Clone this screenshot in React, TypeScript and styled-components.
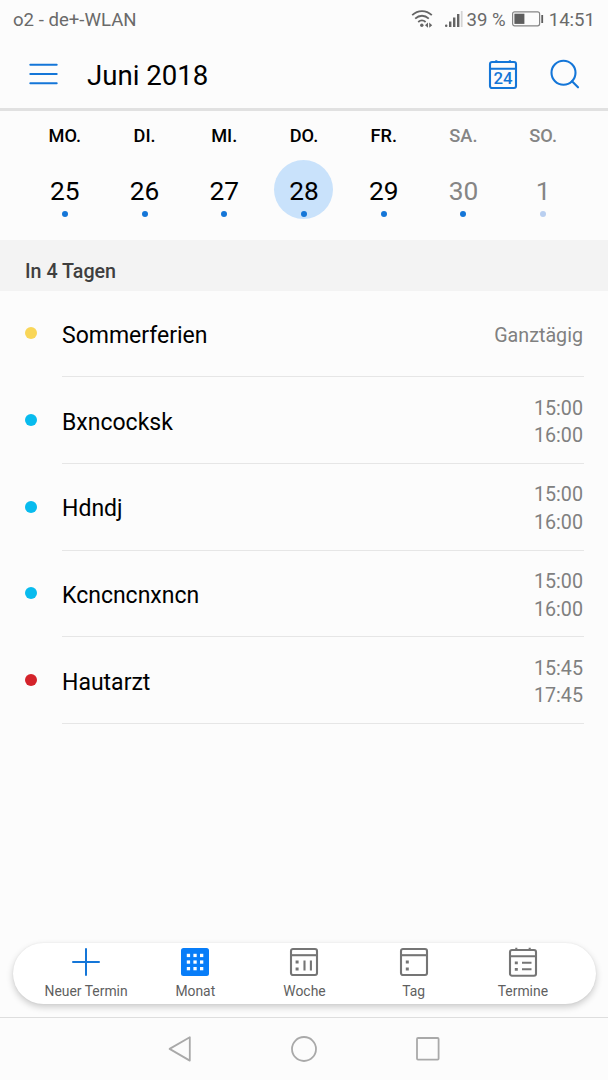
import React from 'react';
import styled, { createGlobalStyle } from 'styled-components';

const BLUE = '#1476d8';

const GlobalStyle = createGlobalStyle`
  * { box-sizing: border-box; }
  body {
    margin: 0;
    background: #fcfcfc;
    font-family: Roboto, 'Liberation Sans', sans-serif;
    color: #000;
  }
  svg { display: block; flex: none; }
`;

const Screen = styled.div`
  width: 608px;
  height: 1080px;
  display: flex;
  flex-direction: column;
  background: #fcfcfc;
  overflow: hidden;
`;

const StatusBar = styled.div`
  height: 40px;
  padding: 0 13px;
  display: flex;
  align-items: center;
  justify-content: space-between;
  font-size: 18.6px;
  line-height: 22px;
  color: #6a6a6a;
  white-space: nowrap;
`;

const StatusInfo = styled.div`
  display: flex;
  align-items: center;
`;

const Battery = styled.span`
  padding: 0 5px 2px 6px;
`;

const Signal = styled.span`
  padding: 0 4px 2px 12px;
`;

const Wifi = styled.span`
  padding-bottom: 2px;
`;

const Header = styled.header`
  height: 71px;
  padding: 0 28px 1px 29px;
  border-bottom: 3px solid #e1e1e1;
  display: flex;
  align-items: center;
`;

const Title = styled.h1`
  margin: 4px 0 0 29px;
  flex: 1;
  font-size: 27.6px;
  line-height: 32px;
  font-weight: 400;
`;

const HeaderActions = styled.div`
  display: flex;
  align-items: center;
  gap: 32px;
  padding-top: 2px;
`;

const Week = styled.section`
  height: 129px;
  padding: 0 25px;
  display: grid;
  grid-template-columns: repeat(7, 1fr);
`;

const Day = styled.div<{ $weekend?: boolean }>`
  display: flex;
  flex-direction: column;
  align-items: center;
  color: ${(p) => (p.$weekend ? '#858585' : '#000')};
`;

const DayName = styled.span`
  margin-top: 14px;
  font-size: 18.2px;
  line-height: 21px;
  font-weight: 500;
`;

const DayCircle = styled.div<{ $selected?: boolean }>`
  width: 59px;
  height: 59px;
  margin-top: 14px;
  border-radius: 50%;
  background: ${(p) => (p.$selected ? '#c9e2fb' : 'transparent')};
  display: flex;
  flex-direction: column;
  align-items: center;
  padding-top: 16px;
`;

const DayNumber = styled.span`
  font-size: 26.3px;
  line-height: 30px;
`;

const DayDot = styled.i<{ $faded?: boolean }>`
  width: 6px;
  height: 6px;
  margin-top: 5px;
  border-radius: 50%;
  background: ${(p) => (p.$faded ? '#b9cff0' : BLUE)};
`;

const SectionLabel = styled.div`
  height: 50.5px;
  padding: 14px 25px 0;
  background: #f3f3f3;
  color: #3f3f3f;
  font-size: 19.7px;
  line-height: 36px;
  font-weight: 500;
`;

const EventList = styled.ul`
  margin: 0;
  padding: 0 24px 0 25px;
  list-style: none;
  flex: 1;
`;

const EventRow = styled.li`
  height: 86.7px;
  display: flex;
  align-items: center;
`;

const EventDot = styled.i<{ $color: string }>`
  width: 12px;
  height: 12px;
  margin: 0 25px 1px 0;
  border-radius: 50%;
  background: ${(p) => p.$color};
`;

const EventBody = styled.div`
  flex: 1;
  height: 100%;
  padding: 4.4px 1px 0 0;
  display: flex;
  align-items: center;
  justify-content: space-between;
  border-bottom: 1px solid #e6e6e6;
`;

const EventName = styled.span`
  font-size: 23px;
`;

const EventTimes = styled.div`
  display: flex;
  flex-direction: column;
  align-items: flex-end;
  font-size: 19.7px;
  line-height: 27.5px;
  color: #808080;
`;

const TabBar = styled.nav`
  height: 61px;
  margin: 0 12.5px 13.5px;
  padding: 4px 18px 0 19px;
  border-radius: 31px;
  background: #fff;
  box-shadow: 0 3px 7px rgba(0, 0, 0, 0.2), 0 0 2px rgba(0, 0, 0, 0.06);
  display: grid;
  grid-template-columns: repeat(5, 1fr);
`;

const Tab = styled.div`
  display: flex;
  flex-direction: column;
  align-items: center;
  gap: 6px;
`;

const TabLabel = styled.span`
  font-size: 13.9px;
  line-height: 17px;
  color: #5f5f5f;
  white-space: nowrap;
`;

const SystemNav = styled.footer`
  height: 63px;
  padding-bottom: 1px;
  border-top: 1px solid #dedede;
  display: flex;
  justify-content: center;
  align-items: center;
  gap: 96px;
`;

const WifiIcon = () => (
  <svg width="22" height="18" viewBox="0 0 22 18" fill="none" stroke="#656565" strokeWidth="1.8">
    <path d="M1.2 5.2C6.8-.2 15.2-.2 20.8 5.2" />
    <path d="M4.2 8.6C8.3 4.8 13.7 4.8 17.8 8.6" />
    <path d="M7.2 12C9.4 10 12.4 10 14.6 12" />
    <circle cx="10.8" cy="15.2" r="1.7" fill="#656565" stroke="none" />
    <path d="M17 12.6v5.2L14 15.2zM18.2 12.6v5.2l3-2.6z" fill="#656565" stroke="none" />
  </svg>
);

const SignalIcon = () => (
  <svg width="18" height="18" viewBox="0 0 18 18" fill="#656565">
    <rect x="0" y="14.4" width="2.4" height="2.6" rx="1" />
    <rect x="4" y="11.5" width="2.4" height="5.5" />
    <rect x="8" y="7.5" width="2.4" height="9.5" />
    <rect x="12" y="4" width="2.4" height="13" />
    <rect x="15.8" y="1" width="1.8" height="16" fill="#d4d4d4" />
  </svg>
);

const BatteryIcon = () => (
  <svg width="32" height="16" viewBox="0 0 32 16">
    <rect x=".6" y=".8" width="27" height="14" rx="2" fill="none" stroke="#858585" strokeWidth="1.2" />
    <rect x="2.4" y="2.7" width="10" height="10.2" fill="#5e5e5e" />
    <rect x="29.3" y="4" width="1.8" height="8" fill="#5e5e5e" />
  </svg>
);

const MenuIcon = () => (
  <svg width="29" height="22" viewBox="0 0 29 22" stroke={BLUE} strokeWidth="2" strokeLinecap="round">
    <path d="M1.3 1.7h26.4M1.3 11h26.4M1.3 20.3h26.4" />
  </svg>
);

const TodayIcon = () => (
  <svg width="30" height="31" viewBox="0 0 30 31" fill="none" stroke={BLUE} strokeWidth="2.1">
    <rect x="2" y="3" width="26" height="26" rx="2" />
    <path d="M2 9.8h26M8.3 1.2v2.6M21.9 1.2v2.6" />
    <text x="15" y="25.4" textAnchor="middle" fill={BLUE} stroke="none" fontSize="16.8" fontWeight="500">
      24
    </text>
  </svg>
);

const SearchIcon = () => (
  <svg width="30" height="31" viewBox="0 0 30 31" fill="none" stroke={BLUE} strokeWidth="2.1" strokeLinecap="round">
    <circle cx="13.5" cy="13.8" r="12" />
    <path d="M22 22.3l6 6" />
  </svg>
);

const PlusIcon = () => (
  <svg width="30" height="30" viewBox="0 0 30 30" stroke={BLUE} strokeWidth="2" strokeLinecap="round">
    <path d="M15 2v26M2 15h26" />
  </svg>
);

const MonthIcon = () => (
  <svg width="30" height="30" viewBox="0 0 30 30">
    <rect x="1" y="1" width="28" height="28" rx="2.5" fill="#087df8" />
    {[0, 1, 2].map((row) =>
      [0, 1, 2].map((col) => (
        <rect key={`${row}${col}`} x={6.8 + col * 6.6} y={6.8 + row * 6.6} width="3.3" height="3.3" fill="#fff" />
      )),
    )}
  </svg>
);

const PageFrame = () => (
  <>
    <rect x="2" y="2" width="26" height="26" rx="2" />
    <path d="M2 8.2h26" />
  </>
);

const WeekIcon = () => (
  <svg width="30" height="30" viewBox="0 0 30 30" fill="none" stroke="#757575" strokeWidth="2.1">
    <PageFrame />
    <path d="M6.6 15h3M6.6 22h3" strokeWidth="3" />
    <path d="M15.5 13.5v10M21.9 13.5v10" />
  </svg>
);

const DayIcon = () => (
  <svg width="30" height="30" viewBox="0 0 30 30" fill="none" stroke="#757575" strokeWidth="2.1">
    <PageFrame />
    <path d="M6.8 15h3M6.8 22h3" strokeWidth="3" />
  </svg>
);

const AgendaIcon = () => (
  <svg width="30" height="30" viewBox="0 0 30 30" fill="none" stroke="#757575" strokeWidth="2.1">
    <rect x="2" y="3" width="26" height="25.7" rx="2" />
    <path d="M2 9.2h26M8.3 .7v3M21.7 .7v3M14 15.8h9.5M14 22.3h9.5" />
    <path d="M6.8 15.8h3M6.8 22.3h3" strokeWidth="2.8" />
  </svg>
);

const BackIcon = () => (
  <svg width="28" height="28" viewBox="0 0 28 28" fill="none" stroke="#a9a9a9" strokeWidth="1.8" strokeLinejoin="round">
    <path d="M23.8 2.2v23.4L3.6 13.9z" />
  </svg>
);

const HomeIcon = () => (
  <svg width="28" height="28" viewBox="0 0 28 28" fill="none" stroke="#a9a9a9" strokeWidth="1.8">
    <circle cx="14" cy="14" r="12" />
  </svg>
);

const RecentsIcon = () => (
  <svg width="28" height="28" viewBox="0 0 28 28" fill="none" stroke="#a9a9a9" strokeWidth="1.8">
    <rect x="3" y="3" width="21.6" height="21.6" rx="1" />
  </svg>
);

const days = [
  { name: 'MO.', number: 25 },
  { name: 'DI.', number: 26 },
  { name: 'MI.', number: 27 },
  { name: 'DO.', number: 28, selected: true },
  { name: 'FR.', number: 29 },
  { name: 'SA.', number: 30, weekend: true },
  { name: 'SO.', number: 1, weekend: true, faded: true },
];

const events = [
  { name: 'Sommerferien', color: '#f9d658', times: ['Ganztägig'] },
  { name: 'Bxncocksk', color: '#08bbee', times: ['15:00', '16:00'] },
  { name: 'Hdndj', color: '#08bbee', times: ['15:00', '16:00'] },
  { name: 'Kcncncnxncn', color: '#08bbee', times: ['15:00', '16:00'] },
  { name: 'Hautarzt', color: '#d4232b', times: ['15:45', '17:45'] },
];

const tabs = [
  { label: 'Neuer Termin', Icon: PlusIcon },
  { label: 'Monat', Icon: MonthIcon },
  { label: 'Woche', Icon: WeekIcon },
  { label: 'Tag', Icon: DayIcon },
  { label: 'Termine', Icon: AgendaIcon },
];

export default function App() {
  return (
    <Screen>
      <GlobalStyle />
      <StatusBar>
        <span>o2 - de+-WLAN</span>
        <StatusInfo>
          <Wifi><WifiIcon /></Wifi>
          <Signal><SignalIcon /></Signal>
          <span>39 %</span>
          <Battery><BatteryIcon /></Battery>
          <span>14:51</span>
        </StatusInfo>
      </StatusBar>
      <Header>
        <MenuIcon />
        <Title>Juni 2018</Title>
        <HeaderActions>
          <TodayIcon />
          <SearchIcon />
        </HeaderActions>
      </Header>
      <Week>
        {days.map((d) => (
          <Day key={d.name} $weekend={d.weekend}>
            <DayName>{d.name}</DayName>
            <DayCircle $selected={d.selected}>
              <DayNumber>{d.number}</DayNumber>
              <DayDot $faded={d.faded} />
            </DayCircle>
          </Day>
        ))}
      </Week>
      <SectionLabel>In 4 Tagen</SectionLabel>
      <EventList>
        {events.map((e) => (
          <EventRow key={e.name}>
            <EventDot $color={e.color} />
            <EventBody>
              <EventName>{e.name}</EventName>
              <EventTimes>
                {e.times.map((t) => (
                  <span key={t}>{t}</span>
                ))}
              </EventTimes>
            </EventBody>
          </EventRow>
        ))}
      </EventList>
      <TabBar>
        {tabs.map(({ label, Icon }) => (
          <Tab key={label}>
            <Icon />
            <TabLabel>{label}</TabLabel>
          </Tab>
        ))}
      </TabBar>
      <SystemNav>
        <BackIcon />
        <HomeIcon />
        <RecentsIcon />
      </SystemNav>
    </Screen>
  );
}
